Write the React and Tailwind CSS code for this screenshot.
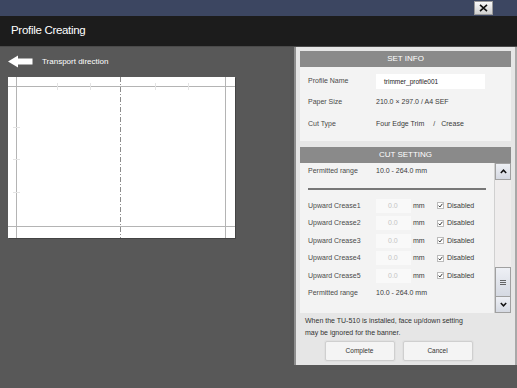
import React from "react";

const creases = [1, 2, 3, 4, 5];

function Row({ label, children, className = "" }) {
  return (
    <div className={`flex items-center ${className}`}>
      <div className="w-[68px] shrink-0 text-[#4a4a4a]">{label}</div>
      <div className="flex items-center text-[#3a3a3a]">{children}</div>
    </div>
  );
}

function PaperPreview() {
  return (
    <div className="ml-[8px] mt-[9px] h-[161px] w-[227px] bg-white shadow-[1px_1px_0_#444]">
      <svg width="227" height="161" viewBox="0 0 227 161">
        <g stroke="#b4b4b4" strokeWidth="1">
          <line x1="8.5" y1="0" x2="8.5" y2="161" />
          <line x1="217.5" y1="0" x2="217.5" y2="161" />
          <line x1="0" y1="9.5" x2="227" y2="9.5" />
          <line x1="0" y1="149.5" x2="227" y2="149.5" />
        </g>
        <g stroke="#e4e4e4" strokeWidth="1">
          <line x1="49.5" y1="6" x2="49.5" y2="13" />
          <line x1="82.5" y1="6" x2="82.5" y2="13" />
          <line x1="147.5" y1="6" x2="147.5" y2="13" />
          <line x1="180.5" y1="6" x2="180.5" y2="13" />
          <line x1="5" y1="50.5" x2="12" y2="50.5" />
          <line x1="5" y1="82.5" x2="12" y2="82.5" />
          <line x1="5" y1="115.5" x2="12" y2="115.5" />
        </g>
        <line
          x1="112.5"
          y1="0"
          x2="112.5"
          y2="161"
          stroke="#8c8c8c"
          strokeWidth="1"
          strokeDasharray="5 2 1 2"
        />
      </svg>
    </div>
  );
}

export default function App() {
  return (
    <div
      className="flex h-[388px] w-[517px] flex-col overflow-hidden bg-[#585858] text-[7px]"
      style={{ fontFamily: '"Liberation Sans", Arial, sans-serif' }}
    >
      {/* top strip */}
      <div className="flex h-[16px] shrink-0 items-start justify-end bg-[#3c4661] pr-[24px] pt-[1px]">
        <button className="flex h-[14px] w-[19px] items-center justify-center border border-[#9a9a9a] bg-gradient-to-b from-[#fafafa] to-[#cfcfcf]">
          <svg width="9" height="8" viewBox="0 0 9 8">
            <path d="M1 0.8 L8 7.2 M8 0.8 L1 7.2" stroke="#111" strokeWidth="1.6" />
          </svg>
        </button>
      </div>

      {/* title */}
      <div className="flex h-[30px] shrink-0 items-center bg-[#1c1c1c] pl-[11px] text-[11.5px] tracking-[-0.3px] text-white">
        Profile Creating
      </div>

      <div className="flex flex-1 border-t border-[#4a4a4a]">
        {/* left */}
        <div className="flex-1">
          <div className="flex items-center pl-[8px] pt-[8px]">
            <svg width="25" height="13" viewBox="0 0 25 13">
              <path d="M0 6.5 L10 0.5 L10 3.5 L24.5 3.5 L24.5 9.5 L10 9.5 L10 12.5 Z" fill="#fff" />
            </svg>
            <span className="ml-[9px] text-[8px] text-white">Transport direction</span>
          </div>
          <PaperPreview />
        </div>

        {/* right panel */}
        <div className="flex h-[318px] w-[223px] flex-col border-l-[2px] border-r-[2px] border-l-[#8e8e8e] border-r-[#a8a8a8] bg-[#e6e6e6] px-[4px] pt-[4px]">
          <div className="flex h-[16px] items-center justify-center bg-[#8a8a8a] text-[8px] text-white">
            SET INFO
          </div>
          <div className="flex h-[74px] flex-col bg-[#f3f3f3] px-[8px] pt-[7px]">
            <Row label="Profile Name" className="h-[15px]">
              <div className="flex h-[15px] w-[109px] items-center bg-white pl-[8px] text-[6.5px] text-[#222]">
                trimmer_profile001
              </div>
            </Row>
            <Row label="Paper Size" className="mt-[6px] h-[15px]">
              210.0 × 297.0 / A4 SEF
            </Row>
            <Row label="Cut Type" className="mt-[7px] h-[15px]">
              Four Edge Trim<span className="ml-[9px]">/</span>
              <span className="ml-[6px]">Crease</span>
            </Row>
          </div>

          <div className="mt-[6px] flex h-[16px] items-center justify-center bg-[#8a8a8a] text-[8px] text-white">
            CUT SETTING
          </div>
          <div className="flex h-[150px]">
            <div className="flex w-[196px] flex-col border-r border-[#d0d0d0] bg-[#f3f3f3] px-[8px]">
              <Row label="Permitted range" className="h-[17px]">
                10.0 - 264.0 mm
              </Row>
              <div className="flex h-[17px] items-center">
                <div className="h-[2px] w-full bg-[#777]" />
              </div>
              {creases.map((n) => (
                <Row key={n} label={`Upward Crease${n}`} className="h-[17.5px]">
                  <div className="flex h-[14px] w-[35px] items-center bg-[#f9f9f9] pl-[12px] text-[#c4c4c4]">
                    0.0
                  </div>
                  <span className="ml-[2px] w-[24px]">mm</span>
                  <span className="flex h-[7px] w-[7px] items-center justify-center border border-[#bbb] bg-white">
                    <svg width="5" height="5" viewBox="0 0 5 5">
                      <path d="M0.6 2.6 L1.9 4 L4.4 0.8" stroke="#222" strokeWidth="0.9" fill="none" />
                    </svg>
                  </span>
                  <span className="ml-[3px]">Disabled</span>
                </Row>
              ))}
              <Row label="Permitted range" className="h-[17.5px]">
                10.0 - 264.0 mm
              </Row>
            </div>

            {/* scrollbar */}
            <div className="flex w-[16px] flex-col bg-[#efeded]">
              <div className="flex h-[17px] items-center justify-center border border-[#a0a0a0] bg-gradient-to-b from-[#eef0f5] to-[#d5d9e2]">
                <svg width="7" height="5" viewBox="0 0 7 5">
                  <path d="M0.8 4 L3.5 1.2 L6.2 4" stroke="#111" strokeWidth="1.5" fill="none" />
                </svg>
              </div>
              <div className="flex-1" />
              <div className="flex h-[30px] items-center justify-center border border-[#a0a0a0] bg-gradient-to-b from-[#eef0f5] to-[#d5d9e2]">
                <svg width="6" height="5" viewBox="0 0 6 5">
                  <path d="M0 0.5 H6 M0 2.5 H6 M0 4.5 H6" stroke="#444" strokeWidth="0.8" />
                </svg>
              </div>
              <div className="flex h-[16px] items-center justify-center border border-t-0 border-[#a0a0a0] bg-gradient-to-b from-[#eef0f5] to-[#d5d9e2]">
                <svg width="7" height="5" viewBox="0 0 7 5">
                  <path d="M0.8 1 L3.5 3.8 L6.2 1" stroke="#111" strokeWidth="1.5" fill="none" />
                </svg>
              </div>
            </div>
          </div>

          <div className="mt-[2px] pl-[5px] leading-[12px] text-[#333]">
            When the TU-510 is installed, face up/down setting
            <br />
            may be ignored for the banner.
          </div>

          <div className="mt-[2px] flex justify-center gap-[8px] pr-[14px]">
            <button className="h-[20px] w-[70px] rounded-[2px] border border-[#cfcfcf] bg-[#f4f4f4] text-[6.5px] text-[#333] shadow-[0_0_0_1px_#e0e0e0]">
              Complete
            </button>
            <button className="h-[20px] w-[70px] rounded-[2px] border border-[#cfcfcf] bg-[#f4f4f4] text-[6.5px] text-[#333] shadow-[0_0_0_1px_#e0e0e0]">
              Cancel
            </button>
          </div>
        </div>
      </div>
    </div>
  );
}
